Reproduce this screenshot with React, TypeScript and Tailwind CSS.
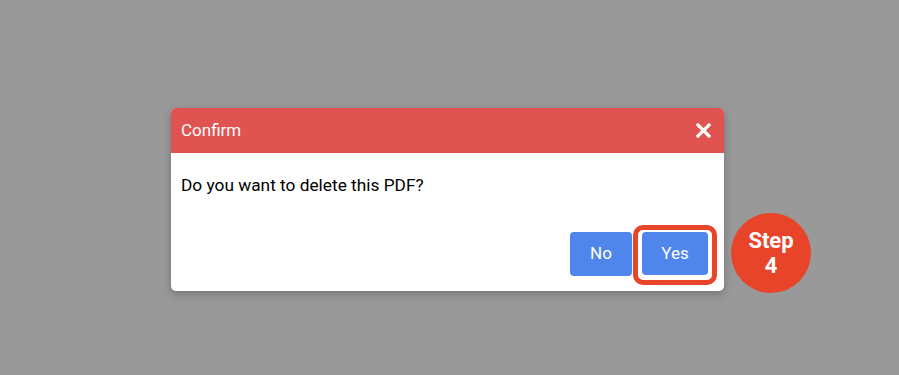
import React from 'react';

export default function App() {
  return (
    <div
      className="w-[899px] h-[375px] bg-[#999999] pl-[171px] pt-[108px]"
      style={{ fontFamily: 'Roboto, "Liberation Sans", sans-serif' }}
    >
      <div className="relative w-[553px]">
        <div className="h-[183px] bg-white rounded-[5px] overflow-hidden shadow-[0_3px_8px_rgba(0,0,0,0.25)] flex flex-col">
          <div className="h-[45px] bg-[#df5350] flex items-center justify-between pl-[10px] pr-[12px]">
            <span className="text-white text-[17px]">Confirm</span>
            <svg width="15" height="15" viewBox="0 0 15 15" className="mr-[1px]">
              <path d="M2 2 L13 13 M13 2 L2 13" stroke="white" strokeWidth="3.2" strokeLinecap="square" />
            </svg>
          </div>
          <div className="flex-1 flex flex-col px-[10px] pt-[20px] pb-[15px]">
            <p className="text-[17.3px] text-black leading-6">Do you want to delete this PDF?</p>
            <div className="mt-auto flex justify-end gap-[10px] pr-[6px]">
              <button className="w-[62px] h-[44px] rounded bg-[#4f86ec] text-white text-[17px]">No</button>
              <div className="relative">
                <button className="w-[66px] h-[43px] rounded bg-[#4f86ec] text-white text-[17px]">Yes</button>
                <div className="absolute -left-[9px] -right-[9px] -top-[7px] -bottom-[9px] border-[5px] border-[#e8442a] rounded-[10px]" />
              </div>
            </div>
          </div>
        </div>
        <div className="absolute left-[560px] top-[105px] w-[80px] h-[80px] rounded-full bg-[#e8442a] flex flex-col items-center justify-center text-white font-bold text-[22px] leading-[25px]">
          <span>Step</span>
          <span>4</span>
        </div>
      </div>
    </div>
  );
}
